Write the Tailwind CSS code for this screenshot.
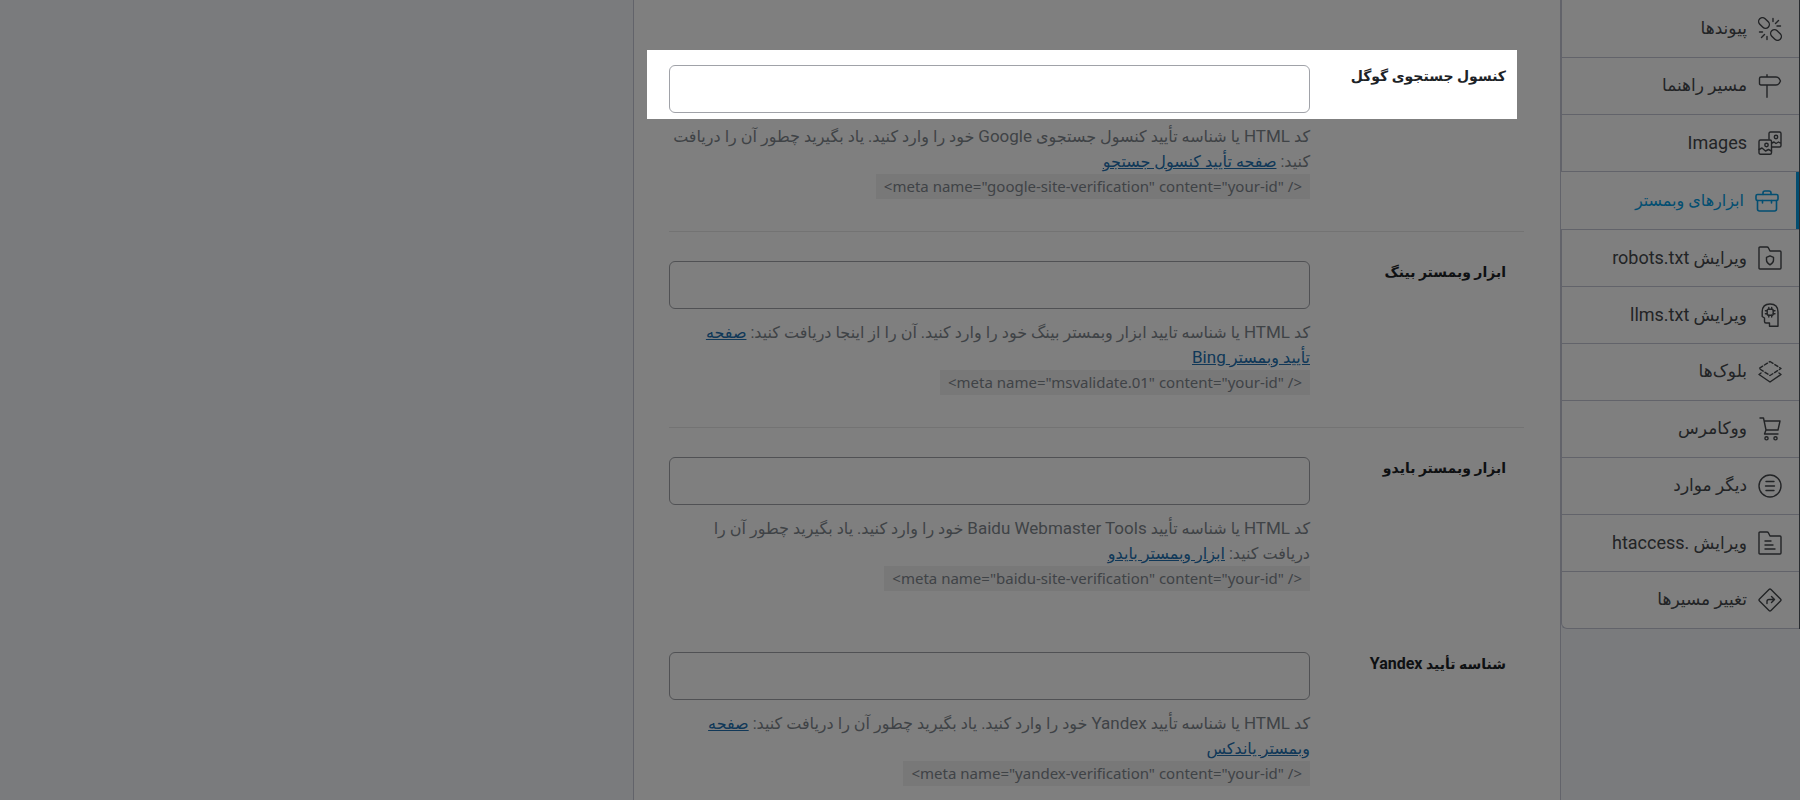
<!DOCTYPE html>
<html lang="fa" dir="rtl">
<head>
<meta charset="utf-8">
<meta name="viewport" content="width=device-width, initial-scale=1">
<title>ابزارهای وبمستر</title>
<script src="https://cdn.jsdelivr.net/npm/@tailwindcss/browser@4"></script>
</head>
<body class="bg-[#f5f7fb] font-[Roboto,'DejaVu_Sans',sans-serif] text-[#50575e] overflow-hidden">
<div class="flex h-screen overflow-hidden">

  <nav aria-label="تنظیمات" class="w-[239px] shrink-0 text-[17px] text-[#45484c]">
    <ul class="border-r border-[#50575e] bg-[#fefefe] rounded-bl-md">
      <li><a href="#links" class="flex h-[58px] items-center gap-[11px] border-b border-l border-[#c4c6d4] pr-[17px]"><svg class="size-6 shrink-0" viewBox="0 0 24 24" fill="none" stroke="currentColor" stroke-width="1.4" stroke-linecap="round" stroke-linejoin="round"><rect x="-6" y="-3.8" width="12" height="7.600" rx="3.800" transform="translate(6 6) rotate(45)"/><rect x="-6" y="-3.8" width="12" height="7.600" rx="3.800" transform="translate(18 18) rotate(45)"/><path d="M15 4.500V1.500M17.500 6.500l3-3M19 9h3.500M1.500 15h3M3.500 20.500l3-3M9 19.500v3"/></svg><span>پیوندها</span></a></li>
      <li><a href="#breadcrumbs" class="flex h-[57px] items-center gap-[11px] border-b border-l border-[#c4c6d4] pr-[17px]"><svg class="size-6 shrink-0" viewBox="0 0 24 24" fill="none" stroke="currentColor" stroke-width="1.4" stroke-linecap="round" stroke-linejoin="round"><path d="M9 .8V3M9 11v12.200M3 3h15q2 0 3.200 1.600L22.500 7l-1.300 2.400Q20 11 18 11H3Q1.500 11 1.500 9.500v-5Q1.500 3 3 3z"/></svg><span>مسیر راهنما</span></a></li>
      <li><a href="#images" class="flex h-[57px] items-center gap-[11px] border-b border-l border-[#c4c6d4] pr-[17px]"><svg class="size-6 shrink-0" viewBox="0 0 24 24" fill="none" stroke="currentColor" stroke-width="1.4" stroke-linecap="round" stroke-linejoin="round"><path d="M11 8V2.500Q11 1 12.500 1h9Q23 1 23 2.500v12q0 1.500-1.500 1.500H14M14 12l2-1 2 1.500 2.500-1.500 2.500 1.500"/><rect x="1" y="9" width="12.500" height="14.200" rx="1.500"/><circle cx="18" cy="6" r="1.700"/><circle cx="8.500" cy="14" r="1.700"/><path d="m1 18.500 3-1.500 3.500 3 3-1.500 3 1.500"/></svg><span class="text-lg">Images</span></a></li>
      <li><a href="#webmaster" aria-current="page" class="flex h-[57px] items-center gap-[11px] border-r-3 border-[#069de3] pr-[17px] text-base text-[#069de3]"><svg class="size-6 shrink-0" viewBox="0 0 24 24" fill="none" stroke="currentColor" stroke-width="1.600" stroke-linecap="round" stroke-linejoin="round"><rect x="1" y="5.500" width="22" height="6" rx="1.500"/><path d="M2.500 11.500V20q0 2 2 2h15q2 0 2-2v-8.500M8 5.500V4q0-2 2-2h4q2 0 2 2v1.500M7.500 11.500V14M16.500 11.500V14"/></svg><span>ابزارهای وبمستر</span></a></li>
      <li><a href="#robots" class="flex h-[58px] items-center gap-[11px] border-y border-l border-[#c4c6d4] pr-[17px]"><svg class="size-6 shrink-0" viewBox="0 0 24 24" fill="none" stroke="currentColor" stroke-width="1.4" stroke-linecap="round" stroke-linejoin="round"><path d="M1 2q0-1 1-1h7q1 0 1.500 1l1.500 3h10q1 0 1 1v16q0 1-1 1H2q-1 0-1-1z"/><path d="m12 9.800 3.500 1.500v3q0 2.500-3.500 4.500-3.500-2-3.500-4.500v-3z"/></svg><span>ویرایش <span class="text-lg">robots.txt</span></span></a></li>
      <li><a href="#llms" class="flex h-[57px] items-center gap-[11px] border-b border-l border-[#c4c6d4] pr-[17px]"><svg class="size-6 shrink-0" viewBox="0 0 24 24" fill="none" stroke="currentColor" stroke-width="1.4" stroke-linecap="round" stroke-linejoin="round"><path d="M20 23.200h-8.500V20H8q-1.500 0-1.500-1.500V15L4.200 13.500V8.500Q4.500 1 12 1q8 0 8 8z"/><rect x="9.200" y="6.200" width="6" height="6" rx="1"/><path d="M10.800 4.400v1.800M13.700 4.400v1.800M10.800 12.200V14M13.700 12.200V14M7.400 7.700h1.800M7.400 10.700h1.800M15.200 7.700H17M15.200 10.700H17"/></svg><span>ویرایش <span class="text-lg">llms.txt</span></span></a></li>
      <li><a href="#blocks" class="flex h-[57px] items-center gap-[11px] border-b border-l border-[#c4c6d4] pr-[17px]"><svg class="size-6 shrink-0" viewBox="0 0 24 24" fill="none" stroke="currentColor" stroke-width="1.4" stroke-linecap="round" stroke-linejoin="round"><path stroke-dasharray="3.500 2.200" d="M12 1.500 23 8.500 12 15.500 1 8.500z"/><path d="m3 13-2 1.500 11 7.500 11-7.500-2-1.500"/></svg><span>بلوک‌ها</span></a></li>
      <li><a href="#woocommerce" class="flex h-[57px] items-center gap-[11px] border-b border-l border-[#c4c6d4] pr-[17px]"><svg class="size-6 shrink-0" viewBox="0 0 24 24" fill="none" stroke="currentColor" stroke-width="1.4" stroke-linecap="round" stroke-linejoin="round"><path d="M2 1h3.500L8 13h12l2-9H6.100M8 13l-1.500 4H20"/><circle cx="8.500" cy="21.300" r="1.600"/><circle cx="17.500" cy="21.300" r="1.600"/></svg><span>ووکامرس</span></a></li>
      <li><a href="#others" class="flex h-[57px] items-center gap-[11px] border-b border-l border-[#c4c6d4] pr-[17px]"><svg class="size-6 shrink-0" viewBox="0 0 24 24" fill="none" stroke="currentColor" stroke-width="1.4" stroke-linecap="round" stroke-linejoin="round"><circle cx="12" cy="12" r="11"/><path d="M8 7.500h8M7.500 12h9M8 16.500h8"/></svg><span>دیگر موارد</span></a></li>
      <li><a href="#htaccess" class="flex h-[57px] items-center gap-[11px] border-b border-l border-[#c4c6d4] pr-[17px]"><svg class="size-6 shrink-0" viewBox="0 0 24 24" fill="none" stroke="currentColor" stroke-width="1.4" stroke-linecap="round" stroke-linejoin="round"><path d="M1 2q0-1 1-1h7q1 0 1.500 1l1.500 3h10q1 0 1 1v16q0 1-1 1H2q-1 0-1-1zM7 10h6M7 14h8M7 18h10"/></svg><span>ویرایش <bdi dir="rtl" class="text-lg">.htaccess</bdi></span></a></li>
      <li><a href="#redirects" class="flex h-[57px] items-center gap-[11px] rounded-bl-md border-b border-l border-[#c4c6d4] pr-[17px]"><svg class="size-6 shrink-0" viewBox="0 0 24 24" fill="none" stroke="currentColor" stroke-width="1.4" stroke-linecap="round" stroke-linejoin="round"><path d="M11 1.500q1-1 2 0l9.500 9.500q1 1 0 2L13 22.500q-1 1-2 0L1.500 13q-1-1 0-2zM9 15.500v-2q0-2 2-2h5M13.500 8.500l3 3-3 3"/></svg><span>تغییر مسیرها</span></a></li>
    </ul>
  </nav>

  <main class="min-w-0 basis-[928px] border-x border-[#c4c6d4] bg-white pt-9 pr-9 pl-[35px]">
    <section class="relative flex border-b border-[#e6e6e6] pt-[29px] pb-8">
      <div aria-hidden="true" class="pointer-events-none absolute top-[14px] right-[7px] -left-[22px] z-10 h-[69px] shadow-[0_0_0_2000px_rgba(0,0,0,0.5)]"></div>
      <label for="google" class="w-[214px] shrink-0 pr-[18px] text-sm font-bold leading-[22px] text-[#1d2327]">کنسول جستجوی گوگل</label>
      <div class="min-w-0 flex-1">
        <input id="google" type="text" class="block h-12 w-full rounded-md border border-[#a0a2a8] bg-white px-3">
        <p class="mt-[11px] text-base leading-[25px] text-[#7f868d]">کد <span class="text-[17px]">HTML</span> یا شناسه تأیید کنسول جستجوی <span class="text-[17px]">Google</span> خود را وارد کنید. یاد بگیرید چطور آن را دریافت کنید: <a href="#google-verify" class="text-[#2271b1] underline">صفحه تأیید کنسول جستجو</a></p>
        <code dir="ltr" class="block w-fit bg-[#f0f0f1] px-2 font-['Noto_Sans'] text-[15px] leading-[25px] text-[#7f868d]">&lt;meta name="google-site-verification" content="your-id" /&gt;</code>
      </div>
    </section>
    <section class="flex border-b border-[#e6e6e6] pt-[29px] pb-8">
      <label for="bing" class="w-[214px] shrink-0 pr-[18px] text-sm font-bold leading-[22px] text-[#1d2327]">ابزار وبمستر بینگ</label>
      <div class="min-w-0 flex-1">
        <input id="bing" type="text" class="block h-12 w-full rounded-md border border-[#a0a2a8] bg-white px-3">
        <p class="mt-[11px] text-base leading-[25px] text-[#7f868d]">کد <span class="text-[17px]">HTML</span> یا شناسه تایید ابزار وبمستر بینگ خود را وارد کنید. آن را از اینجا دریافت کنید: <a href="#bing-verify" class="text-[#2271b1] underline">صفحه<br>تأیید وبمستر <span class="text-[17px]">Bing</span></a></p>
        <code dir="ltr" class="block w-fit bg-[#f0f0f1] px-2 font-['Noto_Sans'] text-[15px] leading-[25px] text-[#7f868d]">&lt;meta name="msvalidate.01" content="your-id" /&gt;</code>
      </div>
    </section>
    <section class="flex pt-[29px] pb-8">
      <label for="baidu" class="w-[214px] shrink-0 pr-[18px] text-sm font-bold leading-[22px] text-[#1d2327]">ابزار وبمستر بایدو</label>
      <div class="min-w-0 flex-1">
        <input id="baidu" type="text" class="block h-12 w-full rounded-md border border-[#a0a2a8] bg-white px-3">
        <p class="mt-[11px] text-base leading-[25px] text-[#7f868d]">کد <span class="text-[17px]">HTML</span> یا شناسه تأیید <span class="text-[17px]">Baidu Webmaster Tools</span> خود را وارد کنید. یاد بگیرید چطور آن را<br>دریافت کنید: <a href="#baidu-verify" class="text-[#2271b1] underline">ابزار وبمستر بایدو</a></p>
        <code dir="ltr" class="block w-fit bg-[#f0f0f1] px-2 font-['Noto_Sans'] text-[15px] leading-[25px] text-[#7f868d]">&lt;meta name="baidu-site-verification" content="your-id" /&gt;</code>
      </div>
    </section>
    <section class="flex pt-[29px] pb-8">
      <label for="yandex" class="w-[214px] shrink-0 pr-[18px] text-sm font-bold leading-[22px] text-[#1d2327]">شناسه تأیید <span class="text-base">Yandex</span></label>
      <div class="min-w-0 flex-1">
        <input id="yandex" type="text" class="block h-12 w-full rounded-md border border-[#a0a2a8] bg-white px-3">
        <p class="mt-[11px] text-base leading-[25px] text-[#7f868d]">کد <span class="text-[17px]">HTML</span> یا شناسه تأیید <span class="text-[17px]">Yandex</span> خود را وارد کنید. یاد بگیرید چطور آن را دریافت کنید: <a href="#yandex-verify" class="text-[#2271b1] underline">صفحه<br>وبمستر یاندکس</a></p>
        <code dir="ltr" class="block w-fit bg-[#f0f0f1] px-2 font-['Noto_Sans'] text-[15px] leading-[25px] text-[#7f868d]">&lt;meta name="yandex-verification" content="your-id" /&gt;</code>
      </div>
    </section>
  </main>
</div>
</body>
</html>
